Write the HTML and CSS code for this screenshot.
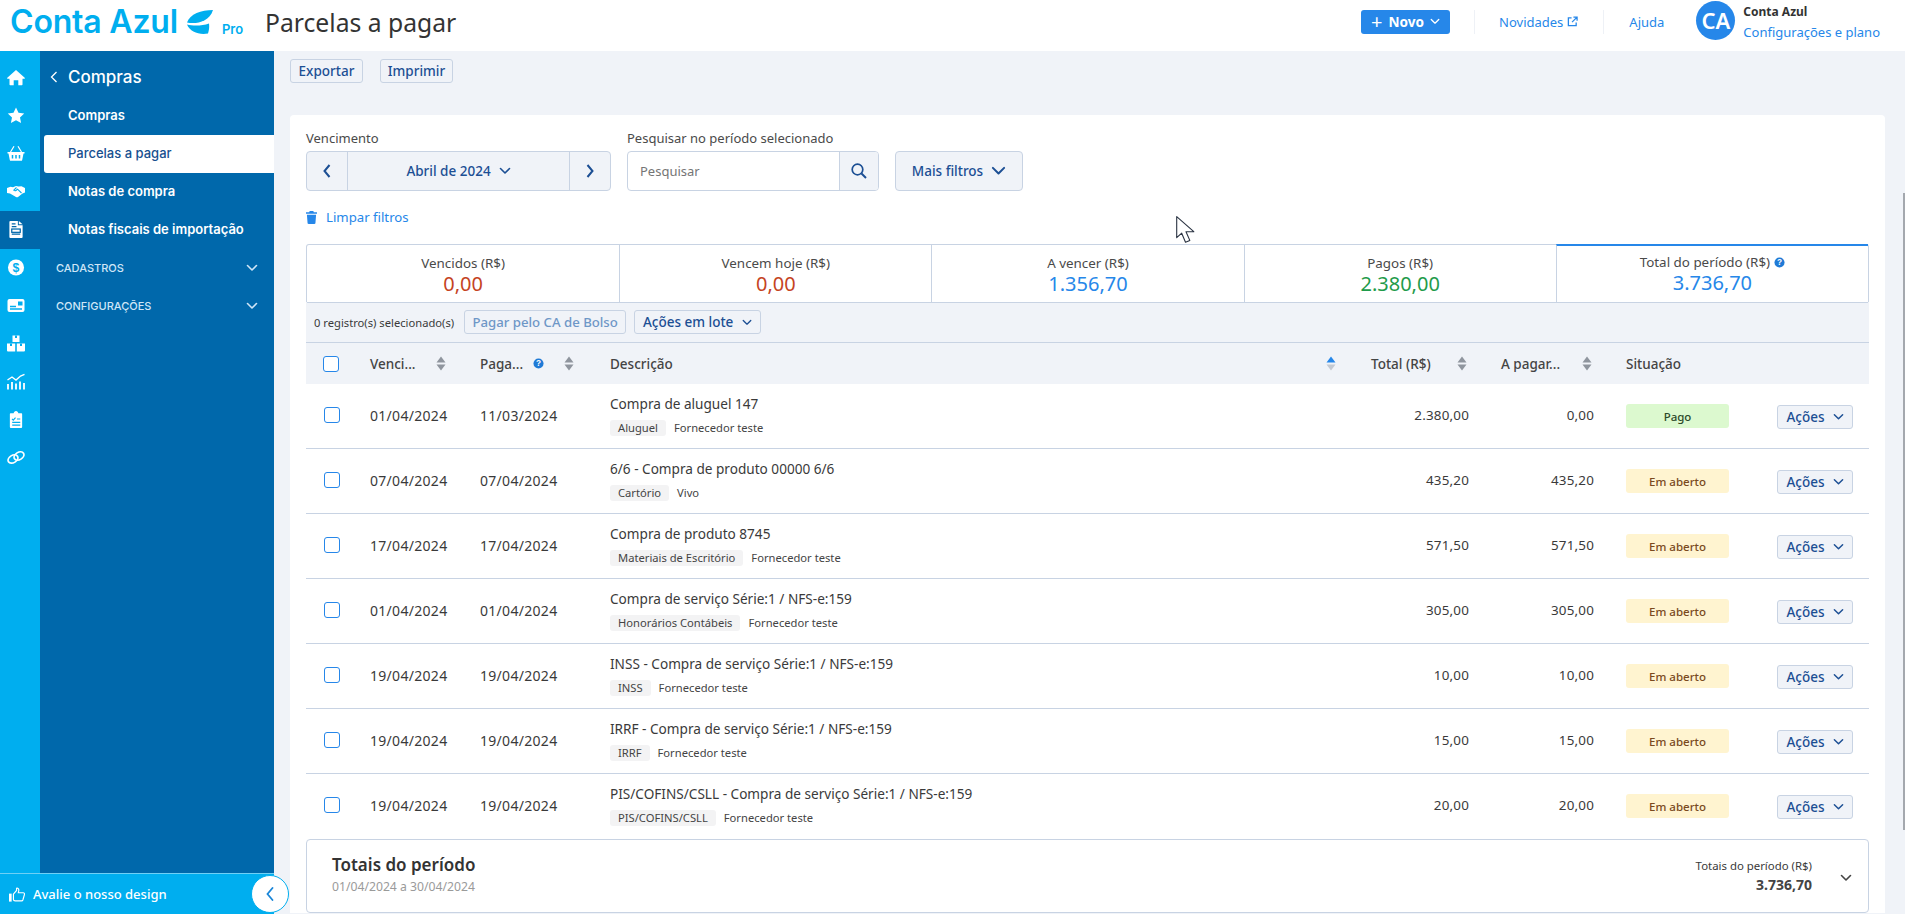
FILE: index.html
```html
<!DOCTYPE html>
<html lang="pt-BR">
<head>
<meta charset="utf-8">
<title>Parcelas a pagar</title>
<link rel="stylesheet" href="styles.css">
</head>
<body>
<svg class="sprite" xmlns="http://www.w3.org/2000/svg">
  <symbol id="chev" viewBox="0 0 12 8"><path d="M1.5 1.5 6 6l4.500-4.500" fill="none" stroke="currentColor" stroke-width="1.600" stroke-linecap="round" stroke-linejoin="round"/></symbol>
  <symbol id="sort" viewBox="0 0 10 15"><path d="M5 0.500 9.500 6.500H.5z" fill="#8f959e"/><path d="M.5 8.500h9L5 14.500z" fill="#8f959e"/></symbol>
  <symbol id="sortup" viewBox="0 0 10 15"><path d="M5 0.500 9.500 6.500H.5z" fill="#2687e9"/><path d="M.5 8.500h9L5 14.500z" fill="#c3c9d2"/></symbol>
  <symbol id="help" viewBox="0 0 12 12"><circle cx="6" cy="6" r="5.500" fill="#1f7ad6"/><text x="6" y="9.200" text-anchor="middle" font-family="Liberation Sans, sans-serif" font-size="9" font-weight="700" fill="#fff">?</text></symbol>
</svg>

<header class="topbar">
  <div class="brand">
    <span class="wordmark">Conta Azul</span>
    <svg class="leaf" viewBox="0 0 26 24"><path d="M26 0C14 0 3 4 0 12.500 8 14 22 13 26 0Z" fill="#00aeef"/><path d="M0 14.500c6 1.500 15 1.500 22-1 .5 3.500 0 7-1 10C12 25 3 22 0 14.500Z" fill="#00aeef"/></svg>
    <span class="pro">Pro</span>
  </div>
  <h1 class="page-title">Parcelas a pagar</h1>
  <div class="top-actions">
    <button class="btn-new"><span class="plus">+</span> Novo <svg class="chev-sm"><use href="#chev"/></svg></button>
    <span class="vsep sep-a"></span>
    <a class="top-link link-first">Novidades <svg class="ext" viewBox="0 0 12 12"><path d="M5 2H1.500v8.500H10V7M7 1.200h4v4M11 1.200 5.500 6.700" fill="none" stroke="currentColor" stroke-width="1.400"/></svg></a>
    <span class="vsep sep-b"></span>
    <a class="top-link help-link">Ajuda</a>
    <span class="avatar">CA</span>
    <div class="account">
      <strong>Conta Azul</strong>
      <a>Configurações e plano</a>
    </div>
  </div>
</header>

<div class="app">
  <aside class="side">
    <div class="side-top">
      <nav class="rail">
        <a class="rail-item"><svg viewBox="0 0 18 16"><path d="M9 .6.3 8.300c-.4.500 0 1 .5 1H2.500v5.700c0 .4.300.7.700.7h3.500v-5h4.600v5h3.500c.4 0 .7-.3.700-.7V9.300h1.700c.5 0 .9-.5.500-1Z" fill="#fff"/></svg></a>
        <a class="rail-item"><svg viewBox="0 0 18 16"><path d="m9 0 2.500 5.300 5.700.7-4.200 3.900 1.100 5.700L9 12.800l-5.100 2.800L5 9.900.8 6l5.700-.7Z" fill="#fff"/></svg></a>
        <a class="rail-item"><svg viewBox="0 0 18 16"><path d="M.5 6.500h17v1.600h-1l-1.300 6.300c-.1.500-.5.900-1 .9H3.800c-.5 0-.9-.4-1-.9L1.500 8.100h-1Z" fill="#fff"/><path d="M3.500 6.500 7 .8M14.500 6.500 11 .8" fill="none" stroke="#fff" stroke-width="1.200"/><path d="M5.500 9.500v3.500M9 9.500v3.500M12.500 9.500v3.500" stroke="#00aeef" stroke-width="1.500"/></svg></a>
        <a class="rail-item"><svg viewBox="0 0 18 16"><path d="M0 4.500 3.500 3.200 6 3.800 9 2.500l2.500.5 3-.2 3.500 1.700V9l-2.500 1-4.500 3.500c-.7.500-1.400.4-2-.1L3 10 0 9.500Z" fill="#fff"/><path d="M9.500 4 6.800 6.700c.8.700 1.600.7 2.500 0l1.200-1 4 3.800" fill="none" stroke="#00aeef" stroke-width="1.100"/></svg></a>
        <a class="rail-item is-active"><svg viewBox="0 0 18 18"><path d="M3 0h8v4.500h5V17a1 1 0 0 1-1 1H3a1 1 0 0 1-1-1V1a1 1 0 0 1 1-1Z" fill="#fff"/><path d="M12 0l4 3.500h-4Z" fill="#fff"/><path d="M4.500 3h4M4.500 6h5M4.500 14h9" stroke="#0068ab" stroke-width="1.300"/><rect x="4.500" y="8.500" width="9" height="3.500" fill="none" stroke="#0068ab" stroke-width="1.300"/></svg></a>
        <a class="rail-item"><svg viewBox="0 0 18 18"><circle cx="9" cy="9" r="8.500" fill="#fff"/><text x="9" y="13.500" text-anchor="middle" font-family="Liberation Sans, sans-serif" font-size="13" font-weight="700" fill="#00aeef">$</text></svg></a>
        <a class="rail-item"><svg viewBox="0 0 18 14"><rect x=".5" y=".5" width="17" height="13" rx="2" fill="#fff"/><path d="M3 8h6M3 10.500h12" stroke="#00aeef" stroke-width="1.300"/><rect x="11" y="3" width="4.500" height="4" fill="#00aeef"/></svg></a>
        <a class="rail-item"><svg viewBox="0 0 18 16"><path d="M5.500 0h7v6.500h-7zM0 8h8.200v8H1a1 1 0 0 1-1-1zM9.800 8H18v7a1 1 0 0 1-1 1H9.800z" fill="#fff"/><path d="M8 0h2v2.500H8zM3 8h2v2.500H3zM13 8h2v2.500h-2z" fill="#00aeef"/></svg></a>
        <a class="rail-item"><svg viewBox="0 0 18 16"><path d="M1 16V10.500M5 16V8.500M9 16V10M13 16V8M17 16V9.500" stroke="#fff" stroke-width="1.800"/><path d="M.5 6.500 5 3.500l4 3 4.500-4L17.500.8" fill="none" stroke="#fff" stroke-width="1.400"/></svg></a>
        <a class="rail-item"><svg viewBox="0 0 18 18"><path d="M3.500 2.500H6.500C6.700 1 7.700 0 9 0s2.300 1 2.500 2.500H14.500c.6 0 1 .5 1 1V17c0 .6-.4 1-1 1h-11c-.6 0-1-.4-1-1V3.500c0-.5.400-1 1-1Z" fill="#fff"/><path d="m4.800 8.300 1.300 1.300L8.500 7M10 8.500h3.500M5 12h8.500M5 15h8.500" fill="none" stroke="#00aeef" stroke-width="1.200"/></svg></a>
        <a class="rail-item"><svg viewBox="0 0 18 14"><g fill="none" stroke="#fff" stroke-width="1.700"><ellipse cx="6" cy="8.500" rx="5.300" ry="3.700" transform="rotate(-32 6 8.500)"/><ellipse cx="12" cy="5.500" rx="5.300" ry="3.700" transform="rotate(-32 12 5.500)"/></g></svg></a>
      </nav>
      <nav class="submenu">
        <div class="submenu-head"><svg class="back" viewBox="0 0 8 12"><path d="M6.500 1 1.500 6l5 5" fill="none" stroke="#fff" stroke-width="1.300"/></svg>Compras</div>
        <a class="sub-item">Compras</a>
        <a class="sub-item is-active">Parcelas a pagar</a>
        <a class="sub-item">Notas de compra</a>
        <a class="sub-item">Notas fiscais de importação</a>
        <a class="sub-group">CADASTROS <svg><use href="#chev"/></svg></a>
        <a class="sub-group">CONFIGURAÇÕES <svg><use href="#chev"/></svg></a>
      </nav>
    </div>
    <div class="side-foot">
      <svg class="thumb" viewBox="0 0 18 16"><path d="M0 7h3v9H0z" fill="#fff"/><path d="M5 7.500 8.500 3.500V1c1.500-.5 2.800.5 2.500 2.500L10.500 6h5.500c1 0 1.700 1 1.400 1.900l-1.800 6.300c-.2.600-.8 1-1.400 1H7c-1 0-2-.5-2-1.500Z" fill="none" stroke="#fff" stroke-width="1.300"/></svg>
      <span>Avalie o nosso design</span>
      <button class="collapse"><svg viewBox="0 0 8 14"><path d="M6.500 1 1.500 7l5 6" fill="none" stroke="#1a86d8" stroke-width="1.800" stroke-linecap="round"/></svg></button>
    </div>
  </aside>

  <main class="main">
    <div class="page-actions">
      <button class="btn btn-page">Exportar</button>
      <button class="btn btn-page">Imprimir</button>
    </div>

    <section class="card">
      <div class="filters">
        <div class="field">
          <label>Vencimento</label>
          <div class="period">
            <button class="period-arrow"><svg viewBox="0 0 8 14"><path d="M6.500 1 1.500 7l5 6" fill="none" stroke="#1c4f94" stroke-width="2"/></svg></button>
            <button class="period-label">Abril de 2024 <svg class="chev-md"><use href="#chev"/></svg></button>
            <button class="period-arrow"><svg viewBox="0 0 8 14"><path d="M1.500 1l5 6-5 6" fill="none" stroke="#1c4f94" stroke-width="2"/></svg></button>
          </div>
        </div>
        <div class="field">
          <label>Pesquisar no período selecionado</label>
          <div class="search">
            <span class="search-input">Pesquisar</span>
            <button class="search-btn"><svg viewBox="0 0 16 16"><circle cx="6.500" cy="6.500" r="5.300" fill="none" stroke="#1c4f94" stroke-width="1.700"/><path d="m10.500 10.500 4.500 4.500" stroke="#1c4f94" stroke-width="2"/></svg></button>
          </div>
        </div>
        <button class="more-filters">Mais filtros <svg><use href="#chev"/></svg></button>
      </div>

      <a class="clear"><svg viewBox="0 0 12 14"><path d="M4 0h4l.5 1.200H12v1.800H0V1.200h3.500ZM1 4h10l-.7 9c0 .6-.5 1-1 1H2.700c-.5 0-1-.4-1-1Z" fill="#2687e9"/></svg>Limpar filtros</a>

      <div class="tabs">
        <div class="tab"><span class="tab-label">Vencidos (R$)</span><span class="tab-value red">0,00</span></div>
        <div class="tab"><span class="tab-label">Vencem hoje (R$)</span><span class="tab-value red">0,00</span></div>
        <div class="tab"><span class="tab-label">A vencer (R$)</span><span class="tab-value blue">1.356,70</span></div>
        <div class="tab"><span class="tab-label">Pagos (R$)</span><span class="tab-value green">2.380,00</span></div>
        <div class="tab is-active"><span class="tab-label">Total do período (R$) <svg class="help"><use href="#help"/></svg></span><span class="tab-value blue">3.736,70</span></div>
      </div>

      <div class="bulk">
        <span class="bulk-count">0 registro(s) selecionado(s)</span>
        <button class="btn btn-muted">Pagar pelo CA de Bolso</button>
        <button class="btn btn-batch">Ações em lote <svg class="chev-sm"><use href="#chev"/></svg></button>
      </div>

      <div class="grid-row grid-head">
        <div class="c-check"><span class="check head-check"></span></div>
        <div class="th">Venci... <svg class="sort s-venc"><use href="#sort"/></svg></div>
        <div class="th">Paga... <svg class="help h-pag"><use href="#help"/></svg> <svg class="sort s-pag"><use href="#sort"/></svg></div>
        <div class="th th-desc">Descrição <svg class="sort"><use href="#sortup"/></svg></div>
        <div class="th">Total (R$) <svg class="sort s-total"><use href="#sort"/></svg></div>
        <div class="th">A pagar... <svg class="sort s-apagar"><use href="#sort"/></svg></div>
        <div class="th">Situação</div>
        <div></div>
      </div>

      <div class="grid-row row">
        <div class="c-check"><span class="check"></span></div>
        <div>01/04/2024</div>
        <div>11/03/2024</div>
        <div class="desc"><div class="desc-title">Compra de aluguel 147</div><div class="meta"><span class="chip">Aluguel</span>Fornecedor teste</div></div>
        <div class="num">2.380,00</div>
        <div class="num">0,00</div>
        <div><span class="badge paid">Pago</span></div>
        <div><button class="btn btn-row">Ações <svg class="chev-row"><use href="#chev"/></svg></button></div>
      </div>
      <div class="grid-row row">
        <div class="c-check"><span class="check"></span></div>
        <div>07/04/2024</div>
        <div>07/04/2024</div>
        <div class="desc"><div class="desc-title">6/6 - Compra de produto 00000 6/6</div><div class="meta"><span class="chip">Cartório</span>Vivo</div></div>
        <div class="num">435,20</div>
        <div class="num">435,20</div>
        <div><span class="badge open">Em aberto</span></div>
        <div><button class="btn btn-row">Ações <svg class="chev-row"><use href="#chev"/></svg></button></div>
      </div>
      <div class="grid-row row">
        <div class="c-check"><span class="check"></span></div>
        <div>17/04/2024</div>
        <div>17/04/2024</div>
        <div class="desc"><div class="desc-title">Compra de produto 8745</div><div class="meta"><span class="chip">Materiais de Escritório</span>Fornecedor teste</div></div>
        <div class="num">571,50</div>
        <div class="num">571,50</div>
        <div><span class="badge open">Em aberto</span></div>
        <div><button class="btn btn-row">Ações <svg class="chev-row"><use href="#chev"/></svg></button></div>
      </div>
      <div class="grid-row row">
        <div class="c-check"><span class="check"></span></div>
        <div>01/04/2024</div>
        <div>01/04/2024</div>
        <div class="desc"><div class="desc-title">Compra de serviço Série:1 / NFS-e:159</div><div class="meta"><span class="chip">Honorários Contábeis</span>Fornecedor teste</div></div>
        <div class="num">305,00</div>
        <div class="num">305,00</div>
        <div><span class="badge open">Em aberto</span></div>
        <div><button class="btn btn-row">Ações <svg class="chev-row"><use href="#chev"/></svg></button></div>
      </div>
      <div class="grid-row row">
        <div class="c-check"><span class="check"></span></div>
        <div>19/04/2024</div>
        <div>19/04/2024</div>
        <div class="desc"><div class="desc-title">INSS - Compra de serviço Série:1 / NFS-e:159</div><div class="meta"><span class="chip">INSS</span>Fornecedor teste</div></div>
        <div class="num">10,00</div>
        <div class="num">10,00</div>
        <div><span class="badge open">Em aberto</span></div>
        <div><button class="btn btn-row">Ações <svg class="chev-row"><use href="#chev"/></svg></button></div>
      </div>
      <div class="grid-row row">
        <div class="c-check"><span class="check"></span></div>
        <div>19/04/2024</div>
        <div>19/04/2024</div>
        <div class="desc"><div class="desc-title">IRRF - Compra de serviço Série:1 / NFS-e:159</div><div class="meta"><span class="chip">IRRF</span>Fornecedor teste</div></div>
        <div class="num">15,00</div>
        <div class="num">15,00</div>
        <div><span class="badge open">Em aberto</span></div>
        <div><button class="btn btn-row">Ações <svg class="chev-row"><use href="#chev"/></svg></button></div>
      </div>
      <div class="grid-row row row-last">
        <div class="c-check"><span class="check"></span></div>
        <div>19/04/2024</div>
        <div>19/04/2024</div>
        <div class="desc"><div class="desc-title">PIS/COFINS/CSLL - Compra de serviço Série:1 / NFS-e:159</div><div class="meta"><span class="chip">PIS/COFINS/CSLL</span>Fornecedor teste</div></div>
        <div class="num">20,00</div>
        <div class="num">20,00</div>
        <div><span class="badge open">Em aberto</span></div>
        <div><button class="btn btn-row">Ações <svg class="chev-row"><use href="#chev"/></svg></button></div>
      </div>

      <div class="totals">
        <div class="totals-left">
          <h2>Totais do período</h2>
          <span>01/04/2024 a 30/04/2024</span>
        </div>
        <div class="totals-right">
          <span>Totais do período (R$)</span>
          <strong>3.736,70</strong>
        </div>
        <svg class="totals-chev"><use href="#chev"/></svg>
      </div>
    </section>
  </main>
</div>

<span class="scroll-thumb"></span>
<svg class="cursor" viewBox="0 0 19 27"><path d="M.7.7v21l5-4.500 3.800 9 4.300-1.800-3.800-8.700h7.800Z" fill="#fff" stroke="#2a3342" stroke-width="1.100" stroke-linejoin="round"/></svg>
</body>
</html>
```

FILE: styles.css
```css
* { box-sizing: border-box; }
html, body { margin: 0; height: 100%; overflow: hidden; }
body {
  font-family: "Noto Sans", sans-serif;
  font-size: 13px;
  color: #3a3a3a;
  background: #f0f3f8;
  display: flex;
  flex-direction: column;
}
button { font-family: inherit; cursor: pointer; }
h1, h2 { margin: 0; font-weight: 400; }
.sprite { display: none; }

/* top bar */
.topbar {
  height: 51px;
  flex: none;
  background: #fff;
  display: flex;
  align-items: center;
  padding-bottom: 8px;
}
.brand { width: 265px; padding-left: 10px; display: flex; align-items: center; flex: none; }
.wordmark { font-family: Inter, sans-serif; font-weight: 600; font-size: 32px; letter-spacing: -.2px; color: #00aeef; line-height: 1; }
.leaf { width: 26px; height: 24px; margin-left: 9px; }
.pro { font-family: Inter, sans-serif; font-weight: 600; font-size: 13px; color: #00aeef; margin-left: 9px; margin-top: 14px; }
.page-title { font-size: 24.7px; color: #333; margin-top: 2px; }
.top-actions { margin-left: auto; display: flex; align-items: center; height: 100%; padding-right: 25px; }
.btn-new {
  width: 89px; height: 24px;
  background: #2687e9; color: #fff; border: 0; border-radius: 3px;
  font-weight: 700; font-size: 13.6px;
  display: flex; align-items: center; justify-content: center; gap: 6px;
}
.plus { font-size: 20px; font-weight: 400; line-height: 1; }
.chev-sm { width: 10px; height: 7px; }
.vsep { width: 1px; height: 24px; background: #eef1f6; }
.sep-a { margin-left: 24px; }
.top-link { color: #2687e9; font-size: 13px; display: flex; align-items: center; gap: 4px; margin-left: 25px; }
.link-first { margin-left: 24px; }
.sep-b { margin-left: 25px; }
.ext { width: 11px; height: 11px; }
.help-link { margin-right: 32px; }
.avatar {
  width: 39px; height: 39px; border-radius: 50%;
  background: #2687e9; color: #fff; font-weight: 600; font-size: 22px;
  display: flex; align-items: center; justify-content: center;
  margin-bottom: 3px;
}
.account { margin-left: 8px; display: flex; flex-direction: column; gap: 2px; line-height: 18px; }
.account strong { font-size: 12px; font-weight: 700; color: #333; }
.account a { color: #2687e9; font-size: 13px; }

/* shell */
.app { flex: 1; min-height: 0; display: flex; }
.side { width: 274px; flex: none; display: flex; flex-direction: column; position: relative; }
.side-top { flex: 1; display: flex; min-height: 0; }
.rail { width: 40px; background: #00aeef; padding-top: 8px; }
.rail-item { height: 38px; display: flex; align-items: center; padding: 0 0 2px 7px; }
.rail-item svg { width: 18px; height: 17px; }
.rail-item.is-active { background: #0068ab; }
.submenu { flex: 1; background: #0068ab; padding-top: 8px; }
.submenu-head {
  height: 38px; display: flex; align-items: center;
  padding: 0 0 2px 10px; color: #fff;
  font-family: Inter, sans-serif; font-weight: 500; font-size: 17px;
}
.back { width: 8px; height: 12px; margin-right: 10px; }
.sub-item {
  display: flex; align-items: center;
  height: 38px; margin-left: 4px; padding: 0 0 2px 24px;
  color: #fff; font-family: Inter, sans-serif; font-weight: 600; font-size: 13px;
}
.sub-item.is-active { background: #fff; color: #17508f; font-weight: 500; border-radius: 3px 0 0 3px; }
.sub-group {
  display: flex; align-items: center; justify-content: space-between;
  height: 38px; padding: 0 16px 0 16px;
  color: #cfe6f7; font-family: Inter, sans-serif; font-size: 11px; font-weight: 500;
}
.sub-group svg { width: 12px; height: 8px; color: #cfe6f7; }
.side-foot {
  height: 41px; flex: none;
  background: #00aeef; border-top: 1px solid #6fd0f5;
  display: flex; align-items: center; padding-left: 9px;
  color: #fff; font-weight: 500; font-size: 13px; gap: 8px;
}
.thumb { width: 16px; height: 15px; }
.collapse {
  position: absolute; left: 251px; bottom: 1px;
  width: 38px; height: 38px; border-radius: 50%;
  background: #fff; border: 1px solid #00aeef; padding: 0;
  display: flex; align-items: center; justify-content: center;
}
.collapse svg { width: 8px; height: 14px; }

/* main */
.main { flex: 1; min-width: 0; padding: 8px 20px 0 16px; overflow: hidden; }
.page-actions { display: flex; gap: 17px; height: 24px; }
.btn {
  height: 24px; padding: 0 8px;
  background: #f0f3f8; border: 1px solid #c8d3e3; border-radius: 3px;
  color: #1c4f94; font-size: 13.5px; font-weight: 500;
  display: inline-flex; align-items: center; justify-content: center; gap: 9px;
  white-space: nowrap;
}
.btn-page { width: 73px; padding: 0; }
.card { margin-top: 32px; background: #fff; border-radius: 4px 4px 0 0; padding: 14px 16px 0; }
.filters { display: flex; align-items: flex-end; gap: 16px; }
.field label { display: block; font-size: 13px; line-height: 18px; margin-bottom: 4px; color: #4a4a4a; }
.period { width: 305px; height: 40px; display: flex; border: 1px solid #c8d3e3; border-radius: 4px; background: #f0f3f8; overflow: hidden; }
.period-arrow { width: 40px; flex: none; background: none; border: 0; padding: 0; display: flex; align-items: center; justify-content: center; }
.period-arrow svg { width: 8px; height: 14px; }
.period-label {
  flex: 1; background: none; border: 0; border-left: 1px solid #c8d3e3; border-right: 1px solid #c8d3e3;
  color: #1c4f94; font-weight: 500; font-size: 13.5px;
  display: flex; align-items: center; justify-content: center; gap: 8px;
}
.chev-md { width: 12px; height: 8px; }
.search { width: 252px; height: 40px; display: flex; border: 1px solid #c8d3e3; border-radius: 4px; overflow: hidden; }
.search-input { flex: 1; display: flex; align-items: center; padding-left: 12px; color: #757575; }
.search-btn { width: 39px; background: #f0f3f8; border: 0; border-left: 1px solid #c8d3e3; padding: 0; display: flex; align-items: center; justify-content: center; }
.search-btn svg { width: 16px; height: 16px; }
.more-filters {
  width: 128px; height: 40px; background: #f0f3f8; border: 1px solid #c8d3e3; border-radius: 4px;
  color: #1c4f94; font-weight: 500; font-size: 13.5px;
  display: flex; align-items: center; justify-content: center; gap: 8px;
}
.more-filters svg { width: 15px; height: 10px; }
.clear { display: flex; align-items: center; gap: 9px; height: 20px; margin: 16px 0 17px; color: #2687e9; font-size: 13.2px; }
.clear svg { width: 11px; height: 13px; }

.tabs { display: grid; grid-template-columns: repeat(5, 1fr); height: 58px; border: 1px solid #c8d3e3; border-bottom: 0; border-radius: 3px 3px 0 0; }
.tab { display: flex; flex-direction: column; align-items: center; justify-content: flex-start; padding-top: 9px; border-left: 1px solid #c8d3e3; border-bottom: 1px solid #c8d3e3; }
.tab:first-child { border-left: 0; }
.tab.is-active { border-top: 2px solid #2687e9; padding-top: 7px; margin-top: -1px; height: 59px; }
.tab-label { font-size: 13.4px; line-height: 18px; color: #4a4a4a; display: flex; align-items: center; gap: 4px; }
.tab-value { font-size: 20px; line-height: 24px; }
.help { width: 11px; height: 11px; }
.red { color: #c5441f; }
.blue { color: #2687e9; }
.green { color: #1f9b4b; }

.bulk { height: 41px; background: #f0f3f8; border-bottom: 1px solid #c8d3e3; display: flex; align-items: center; gap: 8px; padding-left: 8px; }
.bulk-count { font-size: 11.2px; color: #3a3a3a; margin-right: 2px; }
.btn-muted { color: #6e97c7; width: 162px; padding: 0; font-size: 13.2px; }
.btn-batch { width: 127px; padding: 0; }

.grid-row { display: grid; grid-template-columns: 64px 110px 130px 1fr 130px 125px 151px 92px; align-items: center; }
.grid-head { height: 41px; background: #f0f3f8; font-weight: 500; color: #444; font-size: 13.5px; }
.th { display: flex; align-items: center; }
.th-desc { justify-content: space-between; padding-right: 35px; }
.sort { width: 10px; height: 15px; flex: none; }
.s-venc { margin-left: 20px; }
.h-pag { margin-left: 10px; }
.s-pag { margin-left: 20px; }
.s-total { margin-left: 26px; }
.s-apagar { margin-left: 22px; }
.c-check { padding-left: 17px; }
.check { display: block; width: 16px; height: 16px; border: 1px solid #2687e9; border-radius: 3px; background: #fff; }
.row { height: 65px; padding-bottom: 2px; border-bottom: 1px solid #c8d3e3; font-size: 14px; letter-spacing: .3px; }
.row-last { border-bottom-color: transparent; }
.row .c-check { padding-left: 18px; }
.desc { letter-spacing: 0; }
.desc-title { font-size: 13.6px; line-height: 18px; }
.meta { display: flex; align-items: center; margin-top: 7px; font-size: 11.2px; color: #444; gap: 8px; }
.chip { height: 16px; padding: 0 8px; background: #f3f3f4; border-radius: 3px; display: flex; align-items: center; }
.num { text-align: right; padding-right: 32px; font-size: 13.4px; letter-spacing: .2px; }
.badge { display: flex; align-items: center; justify-content: center; width: 103px; height: 24px; margin-top: 2px; border-radius: 3px; font-size: 11.5px; font-weight: 500; letter-spacing: 0; }
.paid { background: #dcf9cf; color: #2c4a2a; }
.open { background: #fff4d0; color: #7a4a1e; }
.btn-row { width: 76px; gap: 8px; letter-spacing: 0; margin-top: 4px; }
.chev-row { width: 11px; height: 8px; }

.totals { height: 74px; border: 1px solid #c8d3e3; border-radius: 4px; display: flex; align-items: center; padding: 0 16px 0 25px; }
.totals-left { flex: 1; display: flex; flex-direction: column; gap: 3px; margin-bottom: 3px; }
.totals-left h2 { font-size: 17px; font-weight: 600; line-height: 22px; color: #333; }
.totals-left span { font-size: 12.2px; line-height: 16px; color: #9a9a9a; }
.totals-right { display: flex; flex-direction: column; align-items: flex-end; gap: 2px; }
.totals-right span { font-size: 11.4px; line-height: 16px; }
.totals-right strong { font-size: 14px; line-height: 18px; font-weight: 700; color: #444; }
.totals-chev { width: 12px; height: 8px; margin: 4px 0 0 28px; color: #444; }

.scroll-thumb { position: fixed; right: 0; top: 193px; width: 2px; height: 637px; background: #a4a8ae; }
.cursor { position: fixed; left: 1176px; top: 216px; width: 19px; height: 27px; }
```
